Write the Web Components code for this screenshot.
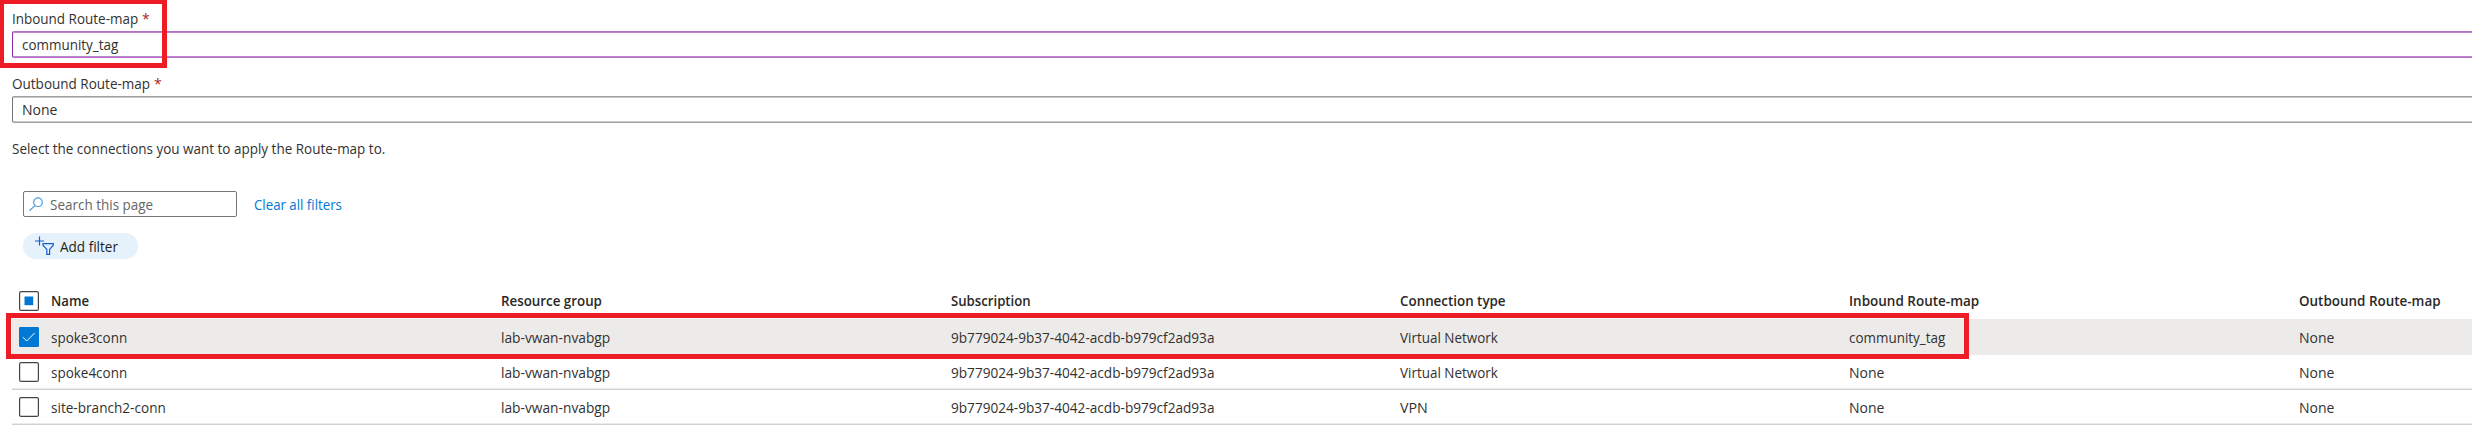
<!DOCTYPE html>
<html lang="en"><head><meta charset="utf-8"><title>Apply Route-map</title>
<style>
html,body{margin:0;background:#fff}
body{width:2472px;height:433px;overflow:hidden;font:14px/20px "Open Sans","Noto Sans",sans-serif;color:#323130}
</style></head><body>
<route-page></route-page>
<script>
const define=(name,html,setup)=>customElements.define(name,class extends HTMLElement{
  connectedCallback(){
    if(this.shadowRoot)return;
    const t=document.createElement('template');t.innerHTML=html;
    this.attachShadow({mode:'open'}).append(t.content.cloneNode(true));
    if(setup)setup(this,this.shadowRoot);
  }
});
// Text run condensed so that it occupies the width given in "w".
define('ui-text','<style>:host{display:block;white-space:nowrap;height:20px;line-height:20px}span{display:inline-block;transform-origin:0 50%}</style><span><slot></slot></span>',(el,root)=>{
  const s=root.querySelector('span'),w=+el.getAttribute('w');
  if(w){s.style.transform='scaleX('+(w/s.offsetWidth)+')';el.style.width=w+'px';}
});
define('ui-field',`<style>
:host{display:block;height:65px;box-sizing:border-box;--line:#a0a0a0;--line2:#c8c8c8;--side:#777}
:host([active]){--line:#b46fc6;--line2:#bd85cf;--side:#8a2da5}
.label{display:flex;gap:4px;height:22px;padding-left:12px}
.star{color:#a4262c}
.box{margin-left:12px;height:27px;box-sizing:border-box;padding:3px 0 0 9px;border:solid var(--line);border-width:1px 0 1px 1px;border-left-color:var(--side);border-radius:2px 0 0 2px;box-shadow:inset 0 1px var(--line2),inset 0 -1px var(--line2)}
</style><div class="label"><slot name="label"></slot><span class="star">*</span></div><div class="box"><slot></slot></div>`);
define('ui-check',`<style>:host{display:block;width:20px;height:20px}svg{display:block}.mixed,.on{display:none}:host([state=mixed]) .mixed,:host([state=on]) .on{display:block}</style>
<svg width="20" height="20" viewBox="0 0 20 20"><rect x=".6" y=".6" width="18.8" height="18.8" rx="1.5" fill="#fff" stroke="#454443" stroke-width="1.2"/><rect class="mixed" x="5.5" y="5.5" width="8.7" height="8.7" fill="#0078d4"/><g class="on"><rect width="20" height="20" rx="2" fill="#0078d4"/><path d="M4 10.2l3.7 3.8 8-8.1" fill="none" stroke="#fff" stroke-width="1"/></g></svg>`);
define('ui-search',`<style>:host{display:flex;box-sizing:border-box;width:214px;height:26px;border:1px solid #777;border-radius:2px;padding:3px 0 0 5px;color:#666}svg{margin:2px 7px 0 0}</style>
<svg width="14" height="15" viewBox="0 0 14 15" fill="none" stroke="#4ba0e1" stroke-width="1.2"><circle cx="9" cy="5.2" r="4.3"/><path d="M6 8.4L.5 13.8"/></svg><slot></slot>`);
define('ui-pill',`<style>:host{display:flex;box-sizing:border-box;width:115px;height:26px;border-radius:13px;background:#e5f1fb;padding:4px 0 0 12px;color:#201f1e}svg{margin:-1px 6px 0 0}</style>
<svg width="19" height="19" viewBox="0 0 19 19" fill="none" stroke="#155fd2" stroke-width="1.2"><path d="M4.5 .5v9M0 5h9M8 7.6h10.3v1.6l-3.7 4.2v5H11.8v-5L8 9.2z"/></svg><slot></slot>`);
define('ui-row',`<style>
:host{display:grid;grid-template-columns:39px 449.5px 450px 449px 449.5px 450px 1fr;margin-left:12px;height:35px;box-sizing:border-box;border-bottom:1px solid #d2d2d2;box-shadow:inset 0 -1px #ebebeb}
:host([head]){height:35px;border:0;box-shadow:none;font-weight:600;color:#292827}
:host([selected]){height:36px;background:#edebe9;border:0;box-shadow:none}
ui-check{margin:7px 0 0 7px}:host([selected]) ui-check{margin-top:8px}
::slotted(ui-text){margin-top:8px}:host([head]) ::slotted(ui-text){margin-top:7px}:host([selected]) ::slotted(ui-text){margin-top:9px}
</style><ui-check></ui-check><slot></slot>`,(el,root)=>root.querySelector('ui-check').setAttribute('state',el.getAttribute('state')||'off'));
// Red annotation frame laid over the page.
define('red-frame','<style>:host{position:absolute;box-sizing:border-box;border:5px solid #ee1c25;pointer-events:none}</style>');
const row=(attrs,cells)=>`<ui-row ${attrs}>${cells.map(([t,w])=>`<ui-text w="${w}">${t}</ui-text>`).join('')}</ui-row>`;
const rg=['lab-vwan-nvabgp',109],id=['9b779024-9b37-4042-acdb-b979cf2ad93a',263.5],vn=['Virtual Network',98],none=['None',35];
define('route-page',`<style>
:host{display:block;position:relative;height:433px;padding-top:9px;box-sizing:border-box;overflow:hidden}
.note{padding-left:12px;height:52px;box-sizing:border-box}
.tools{display:flex;gap:17px;padding-left:23px;height:42px}
.tools>ui-text{margin-top:4px;color:#0078d4}
ui-pill{margin-left:23px}
.table{margin-top:25px}
.f1{left:0;top:0;width:167px;height:68px;border-top-width:4px;border-left-width:4px}
.f2{left:6px;top:313px;width:1963px;height:46px;box-shadow:inset 0 1px #fff}
</style>
<ui-field active><ui-text slot="label" w="126">Inbound Route-map</ui-text><ui-text w="96">community_tag</ui-text></ui-field>
<ui-field><ui-text slot="label" w="138">Outbound Route-map</ui-text><ui-text w="35">None</ui-text></ui-field>
<div class="note"><ui-text w="373.5">Select the connections you want to apply the Route-map to.</ui-text></div>
<div class="tools"><ui-search><ui-text w="103">Search this page</ui-text></ui-search><ui-text w="88">Clear all filters</ui-text></div>
<ui-pill><ui-text w="58">Add filter</ui-text></ui-pill>
<div class="table">
${row('head state="mixed"',[['Name',38.5],['Resource group',101],['Subscription',80],['Connection type',106],['Inbound Route-map',130],['Outbound Route-map',142]])}
${row('selected state="on"',[['spoke3conn',76],rg,id,vn,['community_tag',96],none])}
${row('',[['spoke4conn',76],rg,id,vn,none,none])}
${row('',[['site-branch2-conn',114.5],rg,id,['VPN',27.5],none,none])}
</div>
<red-frame class="f1"></red-frame><red-frame class="f2"></red-frame>`);
</script></body></html>
